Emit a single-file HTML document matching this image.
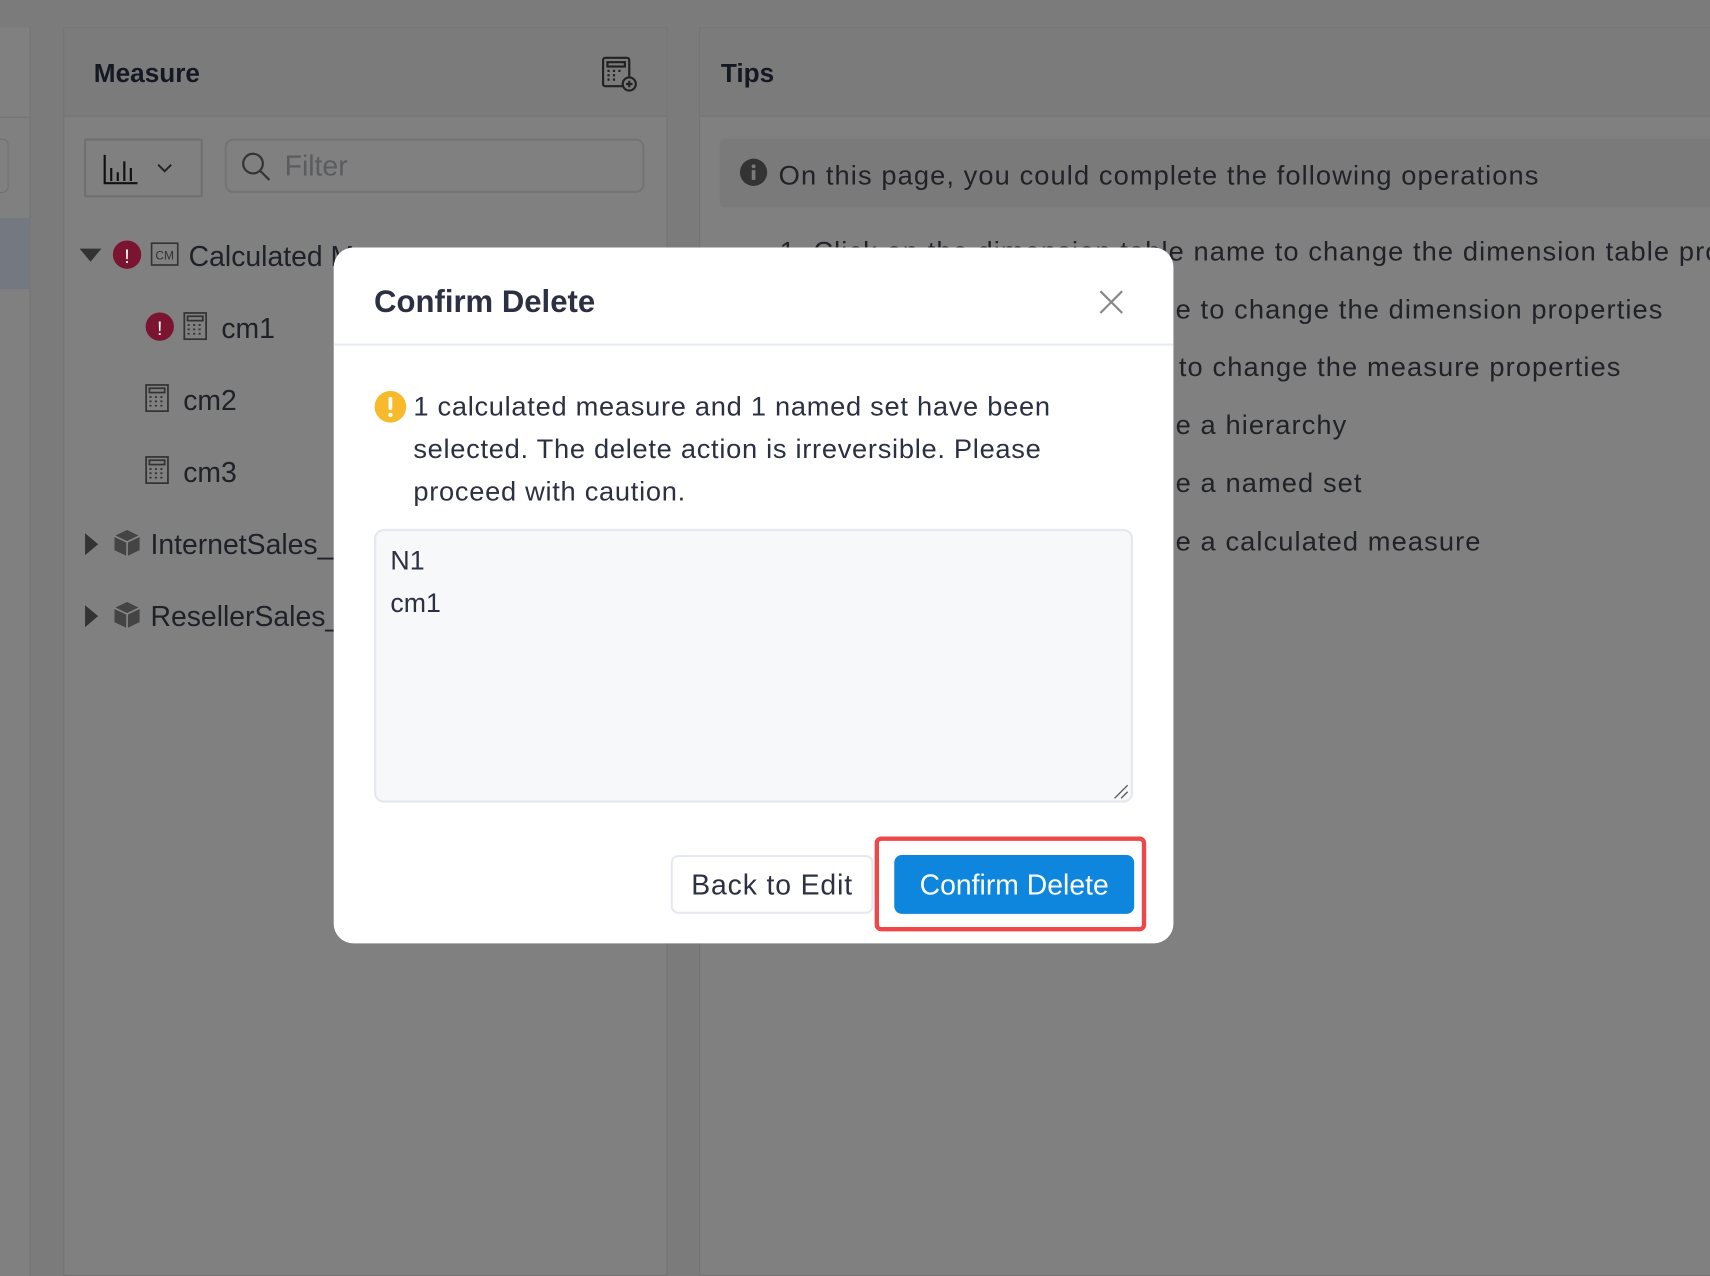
<!DOCTYPE html>
<html><head><meta charset="utf-8"><style>
*{box-sizing:border-box;margin:0;padding:0}
html,body{width:1710px;height:1276px;overflow:hidden;background:#7b7b7b;font-family:"Liberation Sans",sans-serif}
#w{position:absolute;left:0;top:0;width:1568px;height:1170px;overflow:hidden;transform:scale(1.09056);transform-origin:0 0}
.a{position:absolute}
.t{position:absolute;white-space:nowrap;color:#1e2128;font-size:24px}
.tips{color:#202228;font-size:25px;letter-spacing:1px}
</style></head><body><div id="w">
<div class="a" style="left:0;top:25px;width:28px;height:1145px;background:#808080;border-right:1px solid #747474"></div>
<div class="a" style="left:0;top:107px;width:28px;height:1px;background:#747474"></div>
<div class="a" style="left:0;top:200px;width:28px;height:65px;background:#737881"></div>
<div class="a" style="left:0;top:127px;width:8px;height:50px;border:1px solid #707070;border-left:none;border-radius:0 6px 6px 0"></div>
<div class="a" style="left:58px;top:25px;width:554px;height:1145px;background:#808080;border:1px solid #747474"></div>
<div class="a" style="left:59px;top:26px;width:552px;height:81px;background:#7b7b7b;border-bottom:1px solid #747474"></div>
<div class="t" style="left:86px;top:54px;font-weight:bold;font-size:24px;color:#141822">Measure</div>
<svg class="a" style="left:550px;top:50px" width="36" height="36" viewBox="0 0 36 36" fill="none" stroke="#222" stroke-width="2"><rect x="3" y="3" width="24" height="26" rx="2"/><rect x="7" y="7" width="16" height="4"/><path d="M7 15h2M12 15h2M17 15h2M7 19h2M12 19h2M7 23h2M12 23h2"/><circle cx="27" cy="27" r="6" fill="#7b7b7b"/><path d="M27 24v6M24 27h6"/></svg>
<div class="a" style="left:77px;top:127px;width:109px;height:54px;border:2px solid #707070;border-radius:2px"></div>
<svg class="a" style="left:94px;top:140px" width="34" height="30" viewBox="0 0 34 30" fill="none" stroke="#111" stroke-width="2"><path d="M2 2v26h30M8 14v12M14 18v8M20 8v18M26 14v12"/></svg>
<svg class="a" style="left:143px;top:148px" width="16" height="12" viewBox="0 0 16 12" fill="none" stroke="#222" stroke-width="1.8"><path d="M2 3l6 6 6-6"/></svg>
<div class="a" style="left:206px;top:127px;width:385px;height:50px;border:2px solid #747474;border-radius:8px"></div>
<svg class="a" style="left:220px;top:138px" width="30" height="30" viewBox="0 0 30 30" fill="none" stroke="#333" stroke-width="2"><circle cx="12" cy="12" r="9"/><path d="M19 19l8 8"/></svg>
<div class="t" style="left:261px;top:137px;color:#5a5c60;font-size:26px">Filter</div>
<svg class="a" style="left:72px;top:226px" width="22" height="16"><path d="M1 2h20L11 14z" fill="#333"/></svg>
<svg class="a" style="left:103px;top:220px" width="27" height="27"><circle cx="13.5" cy="13.5" r="13" fill="#7b1431"/><text x="13.5" y="21" text-anchor="middle" fill="#fff" font-size="18" font-family="Liberation Sans">!</text></svg>
<svg class="a" style="left:138px;top:222px" width="26" height="22"><rect x="1" y="1" width="24" height="20" fill="none" stroke="#333" stroke-width="1.5"/><text x="13" y="16" text-anchor="middle" fill="#333" font-size="11" font-family="Liberation Sans">CM</text></svg>
<div class="t" style="left:173px;top:220px;font-size:26px">Calculated M</div>
<svg class="a" style="left:133px;top:286px" width="27" height="27"><circle cx="13.5" cy="13.5" r="13" fill="#7b1431"/><text x="13.5" y="21" text-anchor="middle" fill="#fff" font-size="18" font-family="Liberation Sans">!</text></svg>
<svg class="a" style="left:167px;top:285px" width="26" height="28" fill="none" stroke="#333" stroke-width="1.6"><rect x="2" y="2" width="20" height="24"/><rect x="5" y="5" width="14" height="4"/><path d="M5 13h2M10 13h2M15 13h2M5 17h2M10 17h2M15 17h2M5 21h2M10 21h2M15 21h2"/></svg>
<div class="t" style="left:203px;top:286px;font-size:26px">cm1</div>
<svg class="a" style="left:132px;top:351px" width="26" height="28" fill="none" stroke="#333" stroke-width="1.6"><rect x="2" y="2" width="20" height="24"/><rect x="5" y="5" width="14" height="4"/><path d="M5 13h2M10 13h2M15 13h2M5 17h2M10 17h2M15 17h2M5 21h2M10 21h2M15 21h2"/></svg>
<div class="t" style="left:168px;top:352px;font-size:26px">cm2</div>
<svg class="a" style="left:132px;top:417px" width="26" height="28" fill="none" stroke="#333" stroke-width="1.6"><rect x="2" y="2" width="20" height="24"/><rect x="5" y="5" width="14" height="4"/><path d="M5 13h2M10 13h2M15 13h2M5 17h2M10 17h2M15 17h2M5 21h2M10 21h2M15 21h2"/></svg>
<div class="t" style="left:168px;top:418px;font-size:26px">cm3</div>
<svg class="a" style="left:76px;top:488px" width="16" height="22"><path d="M2 1v20l12-10z" fill="#333"/></svg>
<svg class="a" style="left:103px;top:484px" width="27" height="28"><path d="M13.5 2L25 7.5v13L13.5 26 2 20.5v-13z" fill="#444"/><path d="M2 7.5l11.5 5.5L25 7.5M13.5 13v13" stroke="#888" stroke-width="1.5" fill="none"/></svg>
<div class="t" style="left:138px;top:484px;font-size:26px">InternetSales_</div>
<svg class="a" style="left:76px;top:554px" width="16" height="22"><path d="M2 1v20l12-10z" fill="#333"/></svg>
<svg class="a" style="left:103px;top:550px" width="27" height="28"><path d="M13.5 2L25 7.5v13L13.5 26 2 20.5v-13z" fill="#444"/><path d="M2 7.5l11.5 5.5L25 7.5M13.5 13v13" stroke="#888" stroke-width="1.5" fill="none"/></svg>
<div class="t" style="left:138px;top:550px;font-size:26px">ResellerSales_</div>
<div class="a" style="left:641px;top:25px;width:927px;height:1145px;background:#808080;border:1px solid #747474;border-right:none"></div>
<div class="a" style="left:642px;top:26px;width:926px;height:81px;background:#7b7b7b;border-bottom:1px solid #747474"></div>
<div class="t" style="left:661px;top:54px;font-weight:bold;font-size:24px;color:#141822">Tips</div>
<div class="a" style="left:660px;top:127px;width:908px;height:63px;background:#7a7a7a;border-radius:4px 0 0 4px"></div>
<svg class="a" style="left:678px;top:145px" width="26" height="26"><circle cx="13" cy="13" r="12.5" fill="#333"/><circle cx="13" cy="7.5" r="1.8" fill="#7a7a7a"/><rect x="11.3" y="11" width="3.4" height="9" fill="#7a7a7a"/></svg>
<div class="t tips" style="left:714px;top:147px">On this page, you could complete the following operations</div>
<div class="a" style="left:715px;top:217px;width:853px;height:34px;overflow:hidden"><div class="t tips" style="left:0;top:0">1. Click on the dimension table name to change the dimension table properties</div></div>
<div class="t tips" style="left:1078px;top:270px">e to change the dimension properties</div>
<div class="t tips" style="left:1081px;top:323px">to change the measure properties</div>
<div class="t tips" style="left:1078px;top:376px">e a hierarchy</div>
<div class="t tips" style="left:1078px;top:429px">e a named set</div>
<div class="t tips" style="left:1078px;top:483px">e a calculated measure</div>
<div class="a" style="left:306px;top:227px;width:770px;height:638px;background:#fff;border-radius:18px"></div>
<div class="t" style="left:343px;top:261px;font-weight:bold;font-size:28.5px;color:#2b3042">Confirm Delete</div>
<svg class="a" style="left:1007px;top:265px" width="24" height="24" fill="none" stroke="#888" stroke-width="2"><path d="M2 2l20 20M22 2L2 22"/></svg>
<div class="a" style="left:306px;top:315px;width:770px;height:2px;background:#e8ebf1"></div>
<svg class="a" style="left:343px;top:358px" width="30" height="30"><circle cx="15" cy="15" r="14.5" fill="#f6ba2b"/><rect x="13.3" y="6" width="3.4" height="12" rx="1.5" fill="#fff"/><circle cx="15" cy="22.5" r="2" fill="#fff"/></svg>
<div class="t" style="left:379px;top:354px;font-size:25px;letter-spacing:0.65px;line-height:39px;color:#2b3042;white-space:normal;width:660px">1 calculated measure and 1 named set have been<br>selected. The delete action is irreversible. Please<br>proceed with caution.</div>
<div class="a" style="left:343px;top:485px;width:696px;height:251px;background:#f7f8fa;border:2px solid #e4e8ef;border-radius:9px"></div>
<div class="t" style="left:358px;top:495px;font-size:24.5px;line-height:39px;color:#2b3042">N1<br>cm1</div>
<svg class="a" style="left:1020px;top:718px" width="16" height="16" stroke="#555" stroke-width="1.2"><path d="M2 14L14 2M8 14L14 8"/></svg>
<div class="a" style="left:615px;top:784px;width:186px;height:54px;border:2px solid #e6e9ef;border-radius:7px"></div>
<div class="t" style="left:615px;top:796px;width:186px;text-align:center;font-size:26px;letter-spacing:0.8px;color:#2b3042">Back to Edit</div>
<div class="a" style="left:802px;top:767px;width:249px;height:87px;border:4px solid #ef4747;border-radius:6px"></div>
<div class="a" style="left:820px;top:784px;width:220px;height:54px;background:#0f86dd;border-radius:7px"></div>
<div class="t" style="left:820px;top:796px;width:220px;text-align:center;font-size:26px;color:#fff">Confirm Delete</div>
</div></body></html>
